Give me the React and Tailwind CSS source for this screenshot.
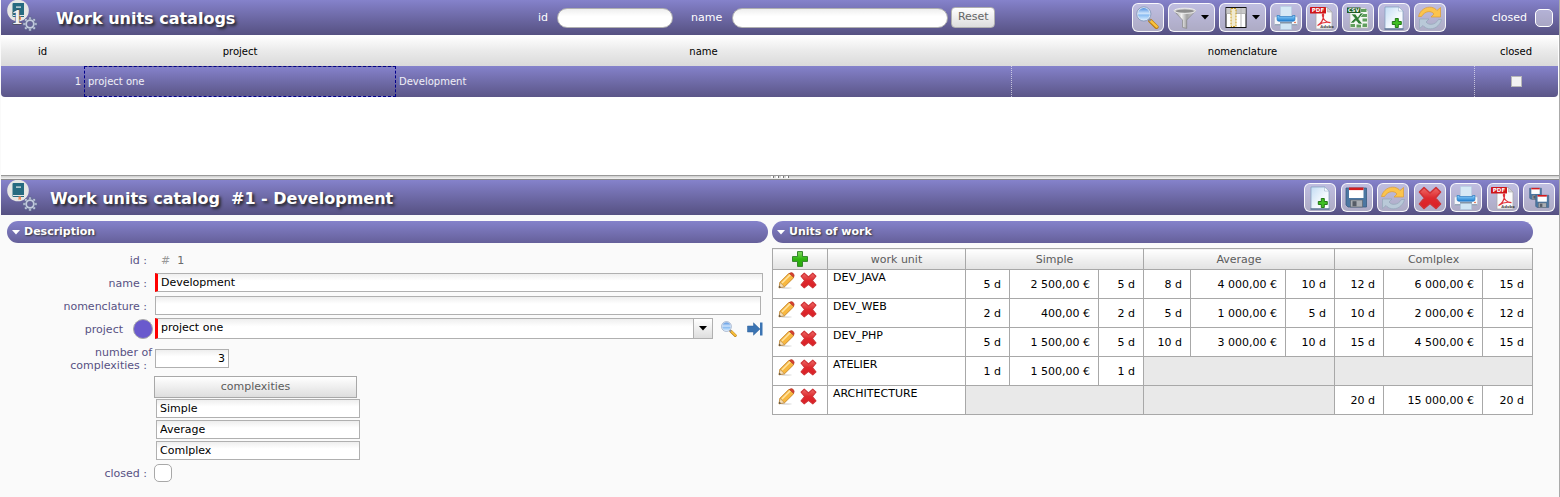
import React from "react";

/* ---------- icons ---------- */

function SearchIcon({ size }) {
  return (
    <svg width={size} height={size} viewBox="0 0 22 22" aria-hidden="true">
      <defs>
        <linearGradient id="lens" x1="0" y1="0" x2="0" y2="1">
          <stop offset="0" stopColor="#4f8fe0" />
          <stop offset=".45" stopColor="#cfe4fb" />
          <stop offset=".6" stopColor="#8bbdf2" />
          <stop offset="1" stopColor="#d4ebff" />
        </linearGradient>
      </defs>
      <path d="M13.600 14.200l6 5.800" stroke="#b97a12" strokeWidth="4" strokeLinecap="round" />
      <path d="M14.200 14.400l5.600 5.400" stroke="#f9c23c" strokeWidth="2.400" strokeLinecap="round" />
      <path d="M11.600 12.200l2.400 2.200" stroke="#8a8f9c" strokeWidth="2" />
      <circle cx="7.500" cy="7.600" r="6.800" fill="#dfe8f4" stroke="#7d94b8" strokeWidth=".8" />
      <circle cx="7.500" cy="7.600" r="5.700" fill="url(#lens)" />
    </svg>
  );
}

function FilterIcon() {
  return (
    <svg width="24" height="24" viewBox="0 0 24 24" aria-hidden="true">
      <defs>
        <linearGradient id="funnel" x1="0" x2="1">
          <stop offset="0" stopColor="#8b8b8b" />
          <stop offset=".35" stopColor="#f1f1f1" />
          <stop offset=".6" stopColor="#a2a2a2" />
          <stop offset="1" stopColor="#d8d8d8" />
        </linearGradient>
      </defs>
      <path d="M1 5l8.500 9v7.400l4.200 1V14L22.500 5z" fill="url(#funnel)" stroke="#858585" strokeWidth=".7" />
      <ellipse cx="11.800" cy="4.800" rx="10.800" ry="2.600" fill="#c9c9c9" stroke="#eee" strokeWidth=".9" />
      <ellipse cx="11.800" cy="5.200" rx="9" ry="1.600" fill="#8d8d8d" />
    </svg>
  );
}

function ColumnsIcon() {
  return (
    <svg width="24" height="21" viewBox="-1.500 0 24 21" aria-hidden="true">
      <rect x=".5" y=".5" width="20" height="20" fill="#fff" stroke="#111" />
      <rect x="1" y="1" width="19" height="5" fill="#c9c9c9" />
      <path d="M1 6.500h19M15.500 1v19" stroke="#b5b5b5" />
      <rect x="5.500" y="1.500" width="5" height="18" fill="#f0ead2" stroke="#c99a17" strokeDasharray="2 1" />
    </svg>
  );
}

function PrinterIcon() {
  return (
    <svg width="24" height="24" viewBox="0 0 24 24" aria-hidden="true">
      <defs>
        <linearGradient id="tray" x1="0" y1="0" x2="0" y2="1">
          <stop offset="0" stopColor="#8fd0fb" />
          <stop offset="1" stopColor="#1f7fd0" />
        </linearGradient>
      </defs>
      <path d="M.5 12q0-1.500 2-1.500h19q2 0 2 1.500v7H.5z" fill="#f4f6f9" stroke="#b7bfcc" strokeWidth=".6" />
      <path d="M.7 18h22.600v1.600H.7z" fill="#9aa7bb" />
      <path d="M6.500.500h11v11h-11z" fill="#d6e9f5" stroke="#b4cfe2" strokeWidth=".6" />
      <path d="M3 9.500h2.500v1h13v-1H21v3.800q0 2-2 2H5q-2 0-2-2z" fill="url(#tray)" stroke="#1b6fb9" strokeWidth=".6" />
      <path d="M6.500 17h11v6.500h-11z" fill="#cfe6f4" stroke="#a9c6dc" strokeWidth=".5" />
      <path d="M6 16.800h12" stroke="#5e7388" />
      <circle cx="21" cy="16.500" r=".8" fill="#e0542a" />
    </svg>
  );
}

function PdfIcon() {
  return (
    <svg width="24" height="24" viewBox="0 0 24 24" aria-hidden="true">
      <path d="M6 1.500h11.500L22 6v17H6z" fill="#fafafa" stroke="#a9a9ad" strokeWidth=".8" />
      <path d="M17.500 1.500V6H22z" fill="#d2d2d6" stroke="#a9a9ad" strokeWidth=".6" />
      <path
        d="M7.500 19.500c3-1.200 6.200-5.500 6.100-10.500 0-1.600-1.500-1.200-1.200.4.700 4.200 4 7.200 8 7.300-4-1-8.600-.2-12.900 2.800z"
        fill="none"
        stroke="#e0333a"
        strokeWidth="1.200"
      />
      <rect x="0" y="1" width="16" height="6.500" rx=".6" fill="#cf1418" />
      <text x="8" y="6.300" textAnchor="middle" fontSize="5.500" fontWeight="bold" fill="#fff" fontFamily="DejaVu Sans, sans-serif">PDF</text>
      <text x="17" y="22" textAnchor="middle" fontSize="3.800" fontWeight="bold" fill="#444" fontFamily="DejaVu Sans, sans-serif">Adobe</text>
    </svg>
  );
}

function CsvIcon() {
  return (
    <svg width="24" height="24" viewBox="0 0 24 24" aria-hidden="true">
      <path d="M4 2h15l3 3v17H4z" fill="#f5f8f4" stroke="#b4bdb2" strokeWidth=".7" />
      <g fill="#5f9f5c">
        <rect x="15" y="3" width="5.500" height="3" />
        <rect x="15" y="8" width="6" height="3" />
        <rect x="16.500" y="12.500" width="4.500" height="3" />
        <rect x="4.500" y="18" width="4.500" height="3" />
        <rect x="10.500" y="18.500" width="4.500" height="3" />
        <rect x="16.500" y="17.500" width="4.500" height="3.500" />
      </g>
      <path d="M5 8l4.500 0 2.200 3.200L14.500 7h3l-4.800 6 4 5h-4l-2.600-3.300L7.500 17H4l4.800-4.700z" fill="#2f7d33" stroke="#f5f8f4" strokeWidth=".7" />
      <rect x="1" y="1.500" width="13.500" height="5.500" fill="#1f5d24" />
      <text x="7.700" y="6.200" textAnchor="middle" fontSize="5" fontWeight="bold" fill="#fff" fontFamily="DejaVu Sans, sans-serif">CSV</text>
    </svg>
  );
}

function NewIcon() {
  return (
    <svg width="22" height="24" viewBox="0 0 22 24" aria-hidden="true">
      <defs>
        <linearGradient id="sheet" x1="0" y1="0" x2="1" y2="1">
          <stop offset="0" stopColor="#c3dcf3" />
          <stop offset=".6" stopColor="#f4f9fe" />
          <stop offset="1" stopColor="#fff" />
        </linearGradient>
      </defs>
      <path d="M2 1h13.500L20 5v18H2z" fill="url(#sheet)" stroke="#7f9cbc" strokeWidth=".7" />
      <path d="M15.500 1v4H20z" fill="#fff" stroke="#8ba6c4" strokeWidth=".5" />
      <path d="M1.500 23h19" stroke="#51698a" strokeWidth="1.200" />
      <path d="M12.300 12.500h3v3h3v3h-3v3h-3v-3h-3v-3h3z" fill="#3fbf23" stroke="#176d0c" strokeWidth=".9" />
    </svg>
  );
}

function RefreshIcon() {
  const arrow = "M.5 10.500C2 4 8 .3 13.500 1.300 16 1.800 17.800 3 19 4.500L22.500 1.500V11H13L16 8C13.500 4.500 7 4.500 3.500 10.500z";
  return (
    <svg width="24" height="24" viewBox="0 0 24 24" aria-hidden="true">
      <path d={arrow} fill="#fbc44d" stroke="#dd9c34" strokeWidth=".7" />
      <path d={arrow} transform="rotate(180 12 12)" fill="#b9c9d8" stroke="#93a6b9" strokeWidth=".7" />
    </svg>
  );
}

function FloppyShape() {
  return (
    <>
      <path d="M1 2h20.500v19H3L1 19z" fill="#4c77a2" stroke="#3a5c80" strokeWidth=".8" />
      <rect x="4" y="2" width="14.500" height="10" fill="#fff" />
      <rect x="4" y="1.500" width="14.500" height="2.600" fill="#d11c1f" />
      <rect x="5.500" y="14" width="12" height="7" fill="#a9adb3" stroke="#595f68" strokeWidth=".6" />
      <rect x="7.500" y="15.200" width="4" height="5" fill="#565c66" />
    </>
  );
}

function SaveIcon() {
  return (
    <svg width="23" height="23" viewBox="0 0 23 23" aria-hidden="true">
      <FloppyShape />
    </svg>
  );
}

function SaveAllIcon() {
  return (
    <svg width="24" height="24" viewBox="0 0 24 24" aria-hidden="true">
      <g transform="translate(2 1) scale(.58)">
        <FloppyShape />
      </g>
      <g transform="translate(8 8) scale(.64)">
        <FloppyShape />
      </g>
    </svg>
  );
}

function CrossIcon({ size }) {
  return (
    <svg width={size} height={size} viewBox="0 0 24 24" aria-hidden="true">
      <defs>
        <linearGradient id="cross" x1="0" y1="0" x2="0" y2="1">
          <stop offset="0" stopColor="#ef6b68" />
          <stop offset=".5" stopColor="#dd2a2e" />
          <stop offset="1" stopColor="#dc1d24" />
        </linearGradient>
      </defs>
      <path
        d="M6 1.500L12 7l6-5.500L22.500 6 17.500 12l5 6-4.500 4.500-6-5-6 5L1.500 18l5-6-5-6z"
        fill="url(#cross)"
        stroke="#cf3236"
        strokeWidth="1.600"
        strokeLinejoin="round"
      />
    </svg>
  );
}

function PencilIcon() {
  return (
    <svg width="17" height="17" viewBox="0 0 17 17" aria-hidden="true">
      <ellipse cx="8" cy="16" rx="6" ry=".7" fill="#d9d9d9" />
      <path d="M1 15.800l1-5.600L11 1.200l4.700 4.500L6.500 14.800z" fill="#f8b840" stroke="#bf7a18" strokeWidth=".8" />
      <path d="M4 11l8.500-8.500" stroke="#ffe3a0" strokeWidth="1.600" />
      <path d="M1 15.800l1.200-5.300 4.200 4.200z" fill="#f6dfb8" stroke="#a77a3e" strokeWidth=".5" />
      <path d="M1 15.800l.5-2 1.500 1.500z" fill="#333" />
      <path d="M11.300 1.400q2.200-1.600 3.900 0t.5 3.900z" fill="#d9412f" stroke="#a62d20" strokeWidth=".5" />
    </svg>
  );
}

function PlusIcon() {
  return (
    <svg width="16" height="16" viewBox="0 0 16 16" aria-hidden="true">
      <defs>
        <linearGradient id="plus" x1="0" y1="0" x2="0" y2="1">
          <stop offset="0" stopColor="#86dd62" />
          <stop offset=".5" stopColor="#2fb510" />
          <stop offset="1" stopColor="#2aa80d" />
        </linearGradient>
      </defs>
      <path d="M5.500.600h5v5h5v4.800h-5v5h-5v-5h-5V5.600h5z" fill="url(#plus)" stroke="#33852a" />
    </svg>
  );
}

function GotoIcon() {
  return (
    <svg width="16" height="16" viewBox="0 0 16 16" aria-hidden="true">
      <path d="M.5 5h6V1.800l6.500 6.200-6.500 6.200V11h-6z" fill="#3b74b3" stroke="#2d5f98" strokeWidth=".5" />
      <path d="M13 1.500h2.500v13H13z" fill="#3b74b3" />
    </svg>
  );
}

function CatalogIcon({ numbered }) {
  const teeth = [0, 45, 90, 135, 180, 225, 270, 315];
  return (
    <svg width="32" height="32" viewBox="0 0 32 32" aria-hidden="true" className="shrink-0 self-start">
      <circle cx="12" cy="10.500" r="10.800" fill="#e6e6e4" />
      <path d="M6.500 4q0-1 1-1H18v14H7.500q-1 0-1-1z" fill="#266a80" />
      <path d="M7 15h11v1H7z" fill="#dfe6e8" />
      <path d="M10 6.500h5v1.200h-5z" fill="#e9eef0" />
      <path d="M12.500 16.500h2.500v3.800l-1.200-1-1.300 1z" fill="#ee8a5a" />
      <g stroke="#5b678c" strokeWidth=".6" fill="#c3cade">
        {teeth.map((a) => (
          <rect key={a} x="22.800" y="17" width="2.400" height="4" transform={`rotate(${a} 24 24)`} />
        ))}
        <circle cx="24" cy="24" r="4.800" />
      </g>
      <circle cx="24" cy="24" r="4.500" fill="#c3cade" />
      <circle cx="24" cy="24" r="2.700" fill="#68639a" stroke="#5b678c" strokeWidth=".6" />
      {numbered && (
        <text
          x="11"
          y="24"
          fontSize="22"
          fontWeight="bold"
          fontFamily="Liberation Serif, serif"
          fill="#f1f1f1"
          stroke="#444"
          strokeWidth="1"
          paintOrder="stroke"
          textAnchor="middle"
        >
          1
        </text>
      )}
    </svg>
  );
}

function Caret({ className = "" }) {
  return (
    <svg width="8" height="5" viewBox="0 0 8 5" className={className} aria-hidden="true">
      <path d="M0 0h8L4 4.500z" fill="currentColor" />
    </svg>
  );
}

/* ---------- shared pieces ---------- */

const FIELD =
  "block border border-[#b0b0b0] bg-linear-to-b from-[#eeeeee] via-white via-40% to-white text-[11px] text-black outline-none rounded-none";

function ToolButton({ label, menu, children }) {
  return (
    <button
      type="button"
      aria-label={label}
      className={`flex h-[29px] shrink-0 items-center rounded-md border border-white/90 bg-white/50 text-black ${
        menu ? "w-[47px] gap-1 pl-1" : "w-8 justify-center"
      }`}
    >
      {children}
      {menu && <Caret />}
    </button>
  );
}

function Bar({ children }) {
  return (
    <header className="flex h-[35px] items-center bg-linear-to-b from-[#8582cb] to-[#565182] text-white">
      {children}
    </header>
  );
}

function Title({ children }) {
  return (
    <h1 className="pt-0.5 text-[16px] font-bold whitespace-pre [text-shadow:2px_2px_3px_#222]">{children}</h1>
  );
}

function SectionTitle({ children }) {
  return (
    <h2>
      <button
        type="button"
        aria-expanded="true"
        className="flex h-[22px] w-full items-center gap-1 rounded-full bg-linear-to-b from-[#8582cb] to-[#65609a] pl-[5px] text-[11px] font-bold text-white [text-shadow:1px_1px_2px_#333]"
      >
        <Caret />
        <span className="pt-px">{children}</span>
      </button>
    </h2>
  );
}

/* ---------- catalog list ---------- */

function CatalogList() {
  const heads = ["id", "project", "name", "nomenclature", "closed"];
  const cell = "border-l border-dotted border-white/60 px-[3px]";
  return (
    <section className="h-[175px]">
      <Bar>
        <div className="flex h-full min-w-0 flex-[0_1_537px] items-center gap-[18px] pl-[5px]">
          <CatalogIcon numbered />
          <Title>Work units catalogs</Title>
        </div>
        <div className="flex items-center text-[11px]">
          <label htmlFor="filter-id" className="pt-0.5 pr-[9px]">id</label>
          <input
            id="filter-id"
            className="h-5 w-[116px] rounded-full border border-[#b0b0b0] bg-linear-to-b from-[#eeeeee] via-white via-40% to-white px-2 text-black outline-none"
          />
          <label htmlFor="filter-name" className="pt-0.5 pr-[10px] pl-[18px]">name</label>
          <input
            id="filter-name"
            className="h-5 w-[216px] rounded-full border border-[#b0b0b0] bg-linear-to-b from-[#eeeeee] via-white via-40% to-white px-2 text-black outline-none"
          />
          <button
            type="button"
            className="ml-[3px] h-[21px] w-11 rounded border border-[#b0b0b0] bg-linear-to-b from-white to-[#dddddd] text-[#656565]"
          >
            Reset
          </button>
        </div>
        <div className="ml-auto flex items-center gap-1">
          <ToolButton label="Search"><SearchIcon size={23} /></ToolButton>
          <ToolButton label="Filter" menu><FilterIcon /></ToolButton>
          <ToolButton label="Columns" menu><ColumnsIcon /></ToolButton>
          <ToolButton label="Print"><PrinterIcon /></ToolButton>
          <ToolButton label="Export to PDF"><PdfIcon /></ToolButton>
          <ToolButton label="Export to CSV"><CsvIcon /></ToolButton>
          <ToolButton label="New"><NewIcon /></ToolButton>
          <ToolButton label="Refresh"><RefreshIcon /></ToolButton>
        </div>
        <label className="flex items-center gap-2 pr-1.5 pl-[46px] text-[11px]">
          <span className="pt-0.5">closed</span>
          <input
            type="checkbox"
            className="size-[18px] appearance-none rounded-[5px] border border-white bg-white/45"
          />
        </label>
      </Bar>
      <div className="pr-px">
        <table className="w-full table-fixed border-separate border-spacing-0 text-[10px]">
          <colgroup>
            <col className="w-[83px]" />
            <col className="w-[312px]" />
            <col className="w-[615px]" />
            <col className="w-[463px]" />
            <col className="w-[84px]" />
          </colgroup>
          <thead>
            <tr className="h-[31px]">
              {heads.map((h) => (
                <th
                  key={h}
                  className="border-t border-white bg-linear-to-b from-white via-[#eaeaea] via-50% to-[#dadada] font-normal text-black"
                >
                  {h}
                </th>
              ))}
            </tr>
          </thead>
          <tbody>
            <tr className="h-[31px] text-white/90 [&>td]:bg-linear-to-b [&>td]:from-[#8582cb] [&>td]:to-[#5b5688]">
              <td className="rounded-bl px-[3px] text-right">1</td>
              <td className="border border-dashed border-[#00008b] px-[3px]">project one</td>
              <td className="px-[3px]">Development</td>
              <td className={cell}></td>
              <td className={`${cell} rounded-br`}>
                <input
                  type="checkbox"
                  aria-label="closed"
                  className="mx-auto block size-[11px] appearance-none border border-[#b8b8b8] bg-[#f3f3f3]"
                />
              </td>
            </tr>
          </tbody>
        </table>
      </div>
    </section>
  );
}

/* ---------- description form ---------- */

function Label({ htmlFor, children }) {
  return (
    <label htmlFor={htmlFor} className="pt-[3px] pr-2 text-right">
      {children}
    </label>
  );
}

function Description() {
  return (
    <section className="min-w-0 flex-1">
      <SectionTitle>Description</SectionTitle>
      <form className="pt-[5px] text-[11px] text-[#575183] [&>div]:grid [&>div]:grid-cols-[148px_minmax(0,1fr)] [&>div]:items-center">
        <div className="h-[23px]">
          <span className="pt-1 pr-2 text-right">id :</span>
          <span className="pt-[3px] pl-1.5 whitespace-pre text-[#6a6a6a]">
            <span className="text-[#999999]">#</span>
            {"  1"}
          </span>
        </div>
        <div className="h-[23px]">
          <Label htmlFor="name">name :</Label>
          <div className="pr-[5px]">
            <input
              id="name"
              defaultValue="Development"
              className={`${FIELD} h-[19px] w-full border-l-[3px] border-l-[#ff0000] px-[3px]`}
            />
          </div>
        </div>
        <div className="h-[23px]">
          <Label htmlFor="nomenclature">nomenclature :</Label>
          <div className="pr-[7px]">
            <input id="nomenclature" className={`${FIELD} h-[19px] w-full px-[5px]`} />
          </div>
        </div>
        <div className="h-[23px]">
          <div className="flex items-center justify-end gap-[10px] pr-0.5">
            <label htmlFor="project" className="pt-[3px]">project</label>
            <span className="size-5 rounded-full border border-[#a8a8a8] bg-[#6a5acd]" />
          </div>
          <div className="flex items-center pr-[5px]">
            <div className="relative mr-2 flex-1">
              <select
                id="project"
                className={`${FIELD} h-[21px] w-full appearance-none border-l-[3px] border-l-[#ff0000] pr-6 pl-[3px]`}
              >
                <option>project one</option>
              </select>
              <span className="pointer-events-none absolute inset-y-0 right-0 flex w-5 items-center justify-center border border-[#b0b0b0] bg-linear-to-b from-white to-[#dedede] text-black">
                <Caret />
              </span>
            </div>
            <button type="button" aria-label="Search project"><SearchIcon size={16} /></button>
            <button type="button" aria-label="Go to project" className="ml-[10px]"><GotoIcon /></button>
          </div>
        </div>
        <div className="h-9">
          <label htmlFor="count" className="pt-0.5 pr-[3px] text-right leading-[13px]">
            number of
            <span className="block pr-[5px]">complexities :</span>
          </label>
          <input id="count" defaultValue="3" className={`${FIELD} h-[19px] w-[74px] px-[3px] text-right`} />
        </div>
        <div>
          <span />
          <div className="-ml-px">
            <h3 className="flex h-[22px] w-[203px] items-center justify-center border border-[#a8a8a8] bg-linear-to-b from-white to-[#dedede] text-[#5c5c5c]">
              complexities
            </h3>
            <div className="space-y-0.5 pt-[1px] pl-0.5">
              {["Simple", "Average", "Comlplex"].map((c) => (
                <input
                  key={c}
                  aria-label="complexity"
                  defaultValue={c}
                  className={`${FIELD} h-[19px] w-[204px] px-[3px]`}
                />
              ))}
            </div>
          </div>
        </div>
        <div className="h-[26px]">
          <Label htmlFor="closed">closed :</Label>
          <input
            id="closed"
            type="checkbox"
            className="-ml-px size-[18px] appearance-none rounded-[5px] border border-[#a8a8a8] bg-white"
          />
        </div>
      </form>
    </section>
  );
}

/* ---------- units of work ---------- */

const UNITS = [
  { name: "DEV_JAVA", cells: [["5 d", "2 500,00 €", "5 d"], ["8 d", "4 000,00 €", "10 d"], ["12 d", "6 000,00 €", "15 d"]] },
  { name: "DEV_WEB", cells: [["2 d", "400,00 €", "2 d"], ["5 d", "1 000,00 €", "5 d"], ["10 d", "2 000,00 €", "12 d"]] },
  { name: "DEV_PHP", cells: [["5 d", "1 500,00 €", "5 d"], ["10 d", "3 000,00 €", "10 d"], ["15 d", "4 500,00 €", "15 d"]] },
  { name: "ATELIER", cells: [["1 d", "1 500,00 €", "1 d"], null, null] },
  { name: "ARCHITECTURE", cells: [null, null, ["20 d", "15 000,00 €", "20 d"]] },
];

function UnitsOfWork() {
  const b = "border border-[#a8a8a8]";
  const th = `${b} bg-linear-to-b from-white to-[#e2e2e2] font-normal text-[#5c5c5c]`;
  return (
    <section className="min-w-0 flex-1">
      <SectionTitle>Units of work</SectionTitle>
      <table className="mt-[5px] w-full table-fixed border-collapse text-[11px] text-black">
        <colgroup>
          <col className="w-[55px]" />
          <col className="w-[138px]" />
          <col className="w-[44px]" />
          <col className="w-[89px]" />
          <col className="w-[45px]" />
          <col className="w-[47px]" />
          <col className="w-[95px]" />
          <col className="w-[49px]" />
          <col className="w-[49px]" />
          <col className="w-[99px]" />
          <col className="w-[50px]" />
        </colgroup>
        <thead>
          <tr className="h-[21px] leading-4">
            <th className={th}>
              <button type="button" aria-label="Add work unit" className="mx-auto block"><PlusIcon /></button>
            </th>
            <th className={`${th} pt-0.5`}>work unit</th>
            <th className={`${th} pt-0.5`} colSpan={3}>Simple</th>
            <th className={`${th} pt-0.5`} colSpan={3}>Average</th>
            <th className={`${th} pt-0.5`} colSpan={3}>Comlplex</th>
          </tr>
        </thead>
        <tbody>
          {UNITS.map((u) => (
            <tr key={u.name} className="h-[29px] bg-white leading-[14px]">
              <td className={`${b} pt-0.5 align-top`}>
                <div className="flex gap-[5px] pl-[5px]">
                  <button type="button" aria-label={`Edit ${u.name}`}><PencilIcon /></button>
                  <button type="button" aria-label={`Delete ${u.name}`}><CrossIcon size={17} /></button>
                </div>
              </td>
              <td className={`${b} pt-px pl-[5px] align-top`}>{u.name}</td>
              {u.cells.map((group, i) =>
                group ? (
                  group.map((v, j) => (
                    <td key={`${i}-${j}`} className={`${b} pt-0.5 pr-2 text-right whitespace-nowrap`}>{v}</td>
                  ))
                ) : (
                  <td key={i} colSpan={3} className={`${b} bg-[#e9e9e9]`}></td>
                )
              )}
            </tr>
          ))}
        </tbody>
      </table>
    </section>
  );
}

/* ---------- page ---------- */

export default function App() {
  return (
    <div className="min-h-screen border-r border-[#aaaaaa] bg-[#fafafa] pl-px font-['DejaVu_Sans',Verdana,sans-serif]">
      <div className="bg-white">
        <CatalogList />
      </div>
      <div
        role="separator"
        className="flex h-[5px] items-start justify-center gap-0.5 border-t border-b border-t-[#999999] border-b-[#8a8a8a] bg-linear-to-b from-[#cccccc] to-[#f4f4f4]"
      >
        {[0, 1, 2, 3].map((i) => (
          <span key={i} className="h-0.5 w-[3px] border-r border-l-2 border-r-[#777777] border-l-white" />
        ))}
      </div>
      <Bar>
        <div className="flex h-full min-w-0 items-center gap-3 pl-[5px]">
          <CatalogIcon />
          <Title>{"Work units catalog  #1 - Development"}</Title>
        </div>
        <div className="mr-1 ml-auto flex w-[251px] items-center justify-between">
          <ToolButton label="New"><NewIcon /></ToolButton>
          <ToolButton label="Save"><SaveIcon /></ToolButton>
          <ToolButton label="Refresh"><RefreshIcon /></ToolButton>
          <ToolButton label="Delete"><CrossIcon size={24} /></ToolButton>
          <ToolButton label="Print"><PrinterIcon /></ToolButton>
          <ToolButton label="Export to PDF"><PdfIcon /></ToolButton>
          <ToolButton label="Save multiple"><SaveAllIcon /></ToolButton>
        </div>
      </Bar>
      <main className="flex gap-1 pt-[6px] pr-[26px] pl-[6px]">
        <Description />
        <UnitsOfWork />
      </main>
    </div>
  );
}
